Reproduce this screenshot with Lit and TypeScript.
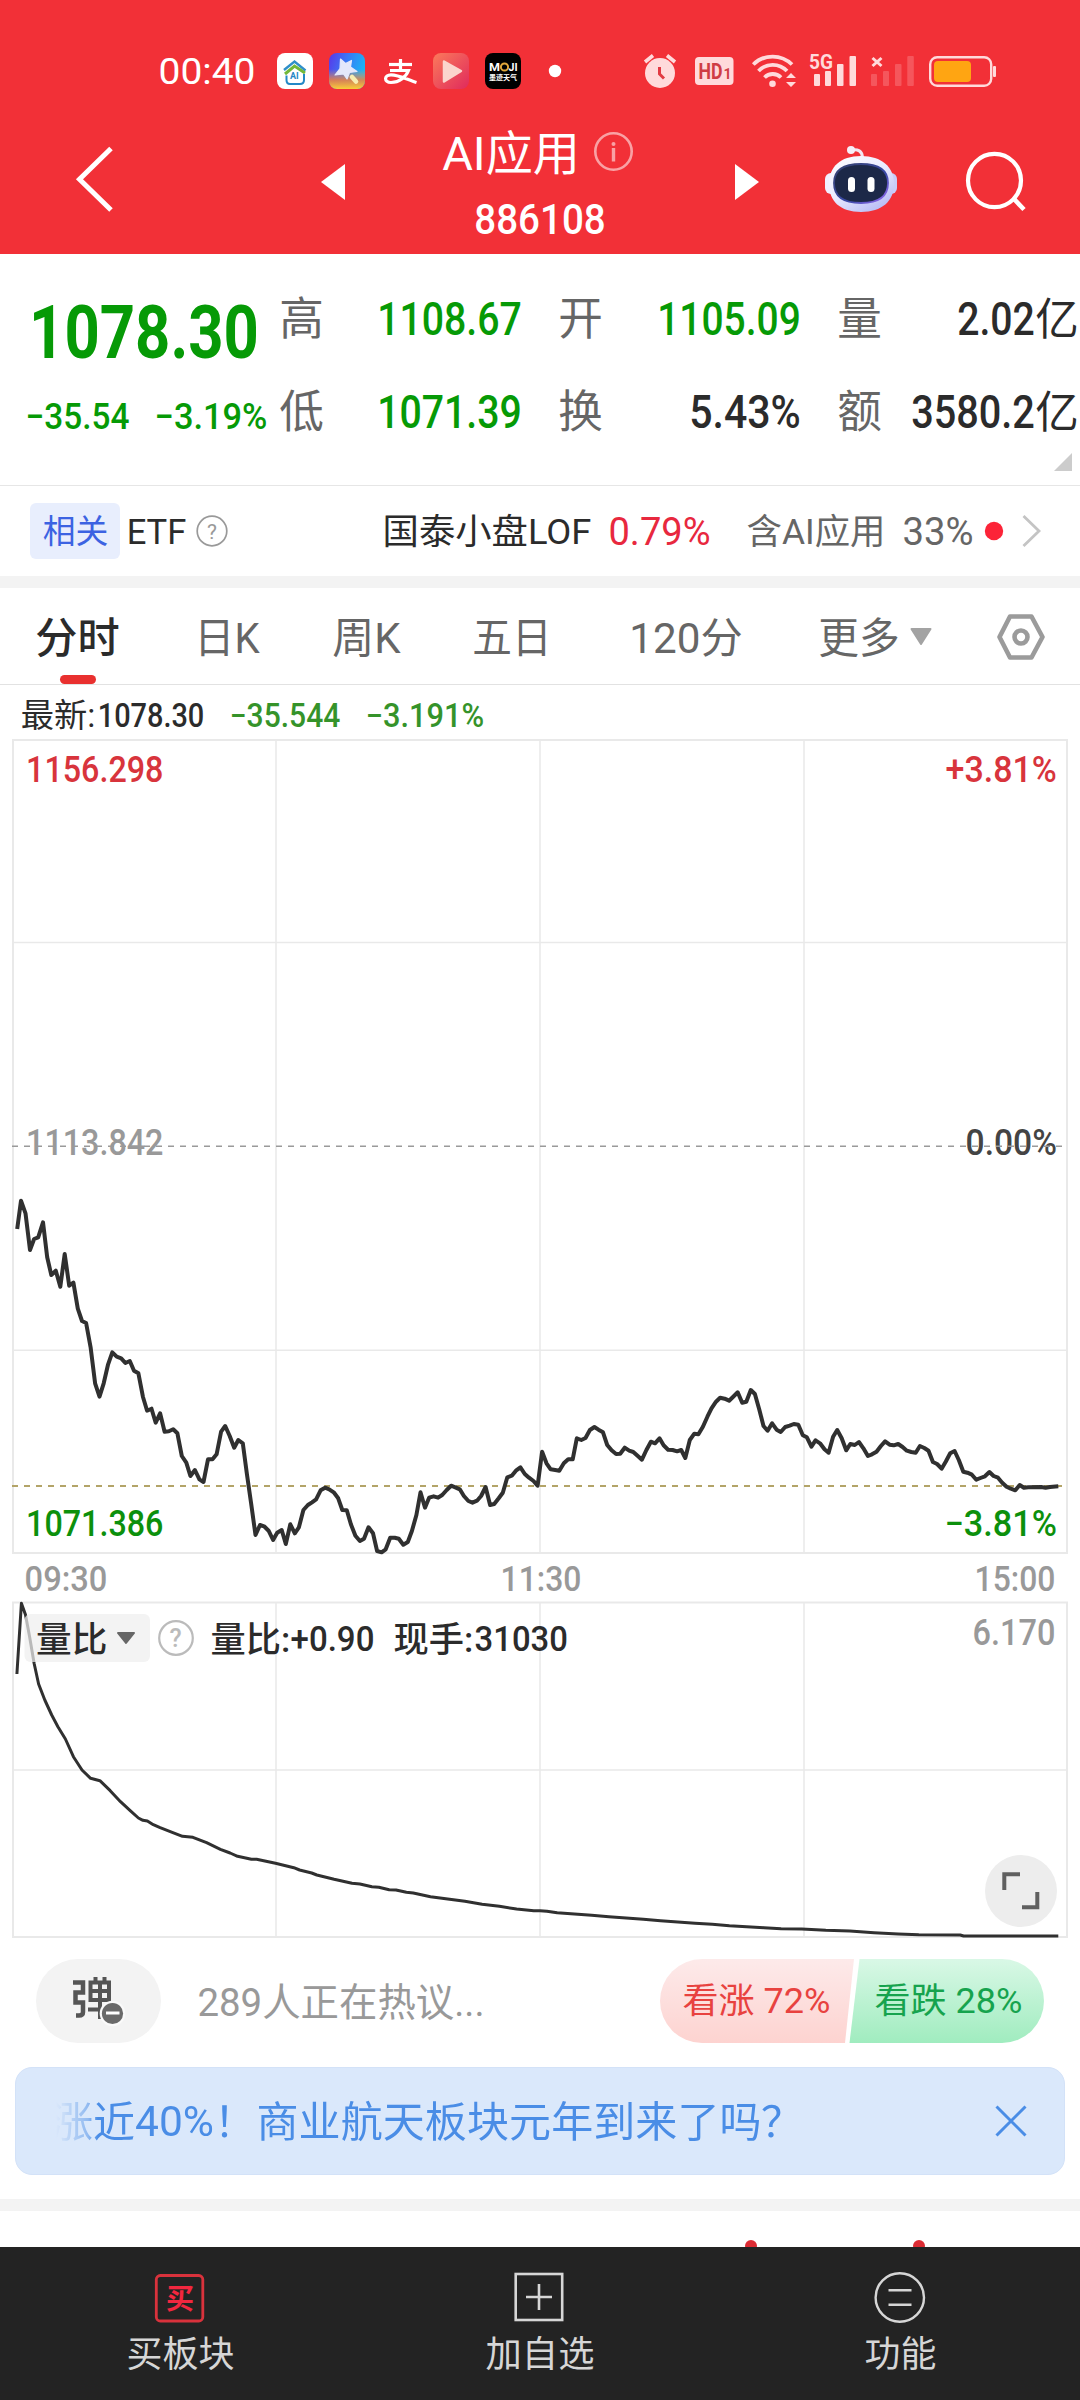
import { LitElement, html, svg, css } from "lit";
import { customElement } from "lit/decorators.js";

/** Text squeezed or stretched to a given ink width, centred on its line. */
const fit = (text: string, width: number, size: number, cls = "") => {
  const pad = size * 0.04;
  return html`<svg class="fit ${cls}" width=${width} height=${size} viewBox="0 0 ${width} ${size}">
    <text x=${-pad} y=${size * 0.862} font-size=${size} textLength=${width + pad * 2} lengthAdjust="spacingAndGlyphs">${text}</text>
  </svg>`;
};

/** Chart label at a position inside the plot. */
const label = (text: string, x1: number, x2: number, y: number, size: number, cls: string) => {
  const pad = size * 0.04;
  return svg`<text class=${cls} x=${x1 - pad} y=${y} font-size=${size} textLength=${x2 - x1 + pad * 2} lengthAdjust="spacingAndGlyphs">${text}</text>`;
};

const icon = (cls: string, x: number, y: number, w: number, h: number, body: unknown) =>
  html`<svg class="icon ${cls}" width=${w} height=${h} viewBox="${x} ${y} ${w} ${h}" fill="none">${body}</svg>`;

const STEP = 540 / 1568;
const toPath = (raw: string, base: number) =>
  raw.trim().split(/\s+/).map((p) => {
    const [x, y] = p.split(",").map(Number);
    return `${(x * STEP).toFixed(1)},${(base + y / 3).toFixed(1)}`;
  }).join(" ");
const shift = (raw: string) =>
  raw.trim().split(/\s+/).map((p) => {
    const [x, y] = p.split(",").map(Number);
    return `${x + 1568},${y}`;
  }).join(" ");

const MORNING = `50,327 61,242 74,280 87,390 99,357 111,352 125,307 137,412 149,465 162,452 175,500 188,402 201,497 213,488 226,566 238,603 250,609 263,682 276,790 289,830 301,790 314,733 326,697 339,710 352,715 364,729 377,723 389,752 402,760 415,830 427,872 440,866 452,908 465,880 478,935 490,934 503,928 515,940 528,1008 541,1028 553,1068 566,1050 579,1078 591,1086 604,1018 617,1018 629,1003 642,935 654,918 667,948 680,983 692,960 705,970 717,1062 729,1150 742,1245 755,1215 767,1219 780,1232 793,1260 805,1238 818,1230 830,1272 843,1213 856,1240 868,1222 881,1170 894,1155 906,1147 918,1138 931,1111 944,1103 956,1108 969,1117 982,1135 994,1170 1007,1171 1019,1213 1032,1247 1045,1263 1057,1256 1070,1222 1083,1240 1095,1293 1108,1297 1120,1288 1133,1253 1146,1253 1158,1256 1171,1274 1184,1266 1196,1233 1209,1185 1221,1117 1234,1163 1246,1133 1259,1129 1272,1133 1284,1125 1297,1110 1310,1097 1322,1102 1335,1108 1347,1128 1360,1143 1372,1148 1385,1142 1397,1128 1410,1101 1423,1155 1435,1152 1448,1135 1460,1118 1473,1072 1486,1067 1498,1052 1511,1042 1524,1062 1536,1073 1549,1083 1561,1097`;
const AFTERNOON = `6,995 19,1030 31,1048 44,1050 56,1052 69,1030 82,1018 95,1018 107,955 120,960 132,954 145,930 158,921 170,929 183,937 195,975 208,991 221,1002 233,1001 246,983 259,992 271,996 284,1008 296,1019 309,990 322,965 334,970 347,955 359,976 372,989 385,990 398,994 410,990 422,1014 435,960 448,941 460,943 473,920 486,890 498,865 511,845 523,833 536,836 549,842 561,830 574,817 587,848 599,845 612,810 624,822 637,870 649,918 661,932 674,910 687,929 699,936 712,921 725,917 737,912 750,914 763,946 775,952 788,980 800,961 813,970 826,988 838,998 851,950 863,930 876,955 889,991 901,972 914,975 926,966 939,985 952,1008 964,1003 977,995 990,978 1002,964 1015,974 1027,976 1040,972 1053,981 1065,992 1078,996 1091,998 1103,978 1116,984 1128,992 1141,1026 1153,1032 1166,1046 1178,1025 1191,1000 1204,993 1216,1020 1229,1055 1241,1058 1254,1064 1267,1079 1279,1074 1292,1069 1305,1056 1317,1068 1330,1073 1342,1088 1355,1100 1367,1106 1380,1111 1393,1095 1405,1103 1418,1102 1455,1101 1468,1103 1481,1101 1505,1099`;
const RATIO_AM = `49,402 62,190 74,224 86,290 99,370 112,432 130,480 150,525 168,560 190,597 213,650 238,690 263,715 290,722 320,752 350,785 378,812 402,834 415,841 428,843 445,854 465,863 500,877 530,889 560,892 600,908 640,928 668,939 690,949 730,958 745,958 800,970 853,983 870,990 905,999 920,1005 970,1018 1022,1030 1045,1032 1080,1040 1100,1042 1130,1049 1150,1050 1180,1057 1200,1059 1250,1070 1300,1077 1350,1084 1400,1093 1450,1099 1500,1107 1550,1112 1568,1112`;
const RATIO_PM = `20,1114 50,1118 100,1122 150,1126 200,1130 250,1134 300,1138 350,1142 400,1146 450,1150 500,1153 550,1157 600,1160 650,1163 700,1166 760,1167 830,1171 900,1173 970,1178 1040,1182 1100,1184 1220,1185 1230,1188 1505,1188`;

const PRICE = toPath(MORNING + " " + shift(AFTERNOON), 1120);
const RATIO = toPath(RATIO_AM + " " + shift(RATIO_PM), 1540);

@customElement("app-root")
export class AppRoot extends LitElement {
  static styles = css`
    :host { display: block; width: 1080px; height: 2400px; overflow: hidden; background: #fff;
      font-family: Roboto, "Noto Sans CJK SC", sans-serif; color: #2b2b2b; }
    * { box-sizing: border-box; }
    .page { display: flex; flex-direction: column; height: 2400px; }
    svg { display: block; flex: none; overflow: visible; }
    .fit text { fill: currentColor; }
    .num text, .num { font-weight: 500; }
    .big text { font-weight: 700; }
    .head { background: #f23037; color: #fff; height: 254px; flex: none; }
    .status { display: flex; align-items: center; height: 120px; padding: 22px 0 0 160px; }
    .s1 { margin-left: 23px; } .s2 { margin-left: 16px; } .s3 { margin-left: 19px; }
    .s4 { margin-left: 16px; } .s5 { margin-left: 16px; } .s6 { margin-left: 27px; }
    .s7 { margin-left: 82px; } .s8 { margin-left: 18px; } .s9 { margin-left: 18px; }
    .s10 { margin-left: 13px; } .s11 { margin-left: 14px; } .s12 { margin-left: 14px; }
    .bar { display: flex; align-items: center; height: 134px; padding: 0 0 12px 76px; }
    .back { margin-top: -4px; }
    .prev { margin: 2px 0 0 208px; }
    .title { width: 190px; margin-left: 98px; align-self: flex-start; }
    .name { display: flex; align-items: center; height: 64px; gap: 15px; padding-left: 1px; }
    .code { display: flex; align-items: center; height: 68px; padding-left: 33px; }
    .next { margin: 2px 0 0 102px; }
    .robot { margin: -3px 0 0 66px; } .search { margin-left: 69px; }

    .quote { display: flex; height: 231px; flex: none; }
    .main { width: 281px; padding-top: 40px; color: #069a06; }
    .price { display: flex; align-items: center; height: 74px; padding-left: 32px; }
    .delta { display: flex; align-items: center; padding: 30px 0 0 27px; gap: 28px; }
    .facts { display: grid; grid-template-columns: 239px 40px 239px 40px 240px; grid-template-rows: 93px 93px;
      padding-top: 18px; width: 799px; position: relative; }
    .fact { display: flex; align-items: center; justify-content: space-between; }
    .f2 { grid-column: 3; } .f3 { grid-column: 5; width: 238px; }
    .fact .lbl { color: #666; }
    .val { display: flex; align-items: center; gap: 4px; }
    .up { color: #069a06; }
    .corner { position: absolute; left: 773px; top: 199px; }
    .related { display: flex; align-items: center; height: 91px; flex: none; border-top: 1px solid #e6e6e6; padding-left: 30px; }
    .tag { width: 90px; height: 56px; border-radius: 6px; background: #e8eefd; color: #3c63e2; display: flex; align-items: center; justify-content: center; }
    .etf { margin-left: 8px; } .help { margin-left: 10px; } .fund { margin-left: 155px; }
    .rise { margin-left: 20px; color: #e8283e; } .has { margin-left: 39px; color: #666; }
    .pct { margin-left: 20px; color: #666; } .chev { margin-left: 12px; }
    .band { height: 12px; background: #f3f3f3; flex: none; }
    .tabs { display: flex; align-items: center; height: 97px; flex: none; border-bottom: 1px solid #e2e2e2; padding: 3px 0 0 37px; color: #666; }
    .tab.on { color: #2b2b2b; position: relative; }
    .tab.on::after { content: ""; position: absolute; left: 23px; bottom: -25px; width: 36px; height: 9px; border-radius: 5px; background: #e9302f; }
    .t2 { margin-left: 78px; } .t3 { margin-left: 76px; } .t4 { margin-left: 75px; }
    .t5 { margin-left: 81px; } .t6 { margin-left: 79px; } .t7 { margin-left: 12px; } .t8 { margin-left: 65px; }
    .latest { display: flex; align-items: center; height: 54px; padding: 6px 0 0 22px; flex: none; }
    .l2 { margin-left: 5px; } .l3 { margin-left: 28px; color: #35932a; } .l4 { margin-left: 28px; color: #35932a; }
    .chart { height: 1215px; }
    .chart text { font-weight: 500; }
    .frame { fill: none; stroke: #e9e9e9; stroke-width: 2; }
    .thin { stroke: #e9e9e9; stroke-width: 1.5; }
    .red { fill: #d8343c; } .grey { fill: #999; } .dark { fill: #444; } .green { fill: #0c900c; } .ink { fill: #2b2b2b; }
    .line { fill: none; stroke: #303030; stroke-linejoin: round; }

    .talk { display: flex; align-items: center; height: 94px; padding-left: 36px; flex: none; }
    .bullet { width: 125px; height: 84px; border-radius: 42px; background: #f3f3f3; display: flex; align-items: center; justify-content: center; }
    .hot { margin: 1px 177px 0 38px; color: #999; }
    .notice { display: flex; align-items: center; height: 108px; margin: 19px 15px 24px; border-radius: 17px; background: #dae8fb; border: 1px solid #d3e2f8; flex: none; }
    .ticker { margin-left: 40px; width: 880px; display: flex; color: #4a8de6; overflow: hidden;
      -webkit-mask-image: linear-gradient(90deg, transparent 0, rgba(0,0,0,.5) 32px, #000 42px);
      mask-image: linear-gradient(90deg, transparent 0, rgba(0,0,0,.5) 32px, #000 42px); }
    .close { margin-left: 59px; }
    .peek { flex: 1; }
    .nav { display: flex; height: 153px; flex: none; background: #232323; color: #d6d6d6; }
    .item { flex: 1; display: flex; flex-direction: column; align-items: center; padding-top: 25px; gap: 12px; }
  `;

  private statusBar() {
    const pale = "#ffdadb";
    return html`<div class="status">
      ${fit("00:40", 94, 37.5)}
      ${icon("s1", 277, 53, 36, 36, svg`
        <rect x="277" y="53" width="36" height="36" rx="8" fill="#fff"/>
        <path d="M284 70 L294.5 61.5 L305.5 70.5" stroke="#2f8fc9" stroke-width="2.4"/>
        <path d="M285 74 L294.5 66 L305 73" stroke="#72b83a" stroke-width="3"/>
        <path d="M286.5 75.500 V80 Q286.500 84 290 84 H300 Q304 84 304 80 V74" stroke="#2388c6" stroke-width="2"/>
        <text x="290" y="79" font-size="9" font-weight="700" fill="#2388c6">AI</text>`)}
      ${icon("s2", 329, 53, 36, 36, svg`
        <defs><linearGradient id="sky" x1="0" y1="0" x2="1" y2=".35"><stop offset="0" stop-color="#5a35e8"/><stop offset=".5" stop-color="#3a78f5"/><stop offset="1" stop-color="#19b4f5"/></linearGradient>
        <linearGradient id="warm" x1="0" y1="0" x2="0" y2="1"><stop offset=".45" stop-color="#f29a55" stop-opacity="0"/><stop offset=".75" stop-color="#f2823c" stop-opacity=".85"/><stop offset="1" stop-color="#f9cf3a"/></linearGradient></defs>
        <rect x="329" y="53" width="36" height="36" rx="8" fill="url(#sky)"/><rect x="329" y="53" width="36" height="36" rx="8" fill="url(#warm)"/>
        <path d="M340.500 59 L345.500 63.500 L351.500 60.500 L350.500 67 L357 71.500 L349.500 72.500 L347 79 L343.500 74 L335 75 L340 68.500Z" fill="#e4e8fb" stroke="#e4e8fb" stroke-width="1.200" stroke-linejoin="round"/>
        <path d="M352 77 L356 81.500" stroke="#f7edb0" stroke-width="4.600" stroke-linecap="round"/>`)}
      ${icon("s3", 384, 57, 33, 28, svg`
        <g stroke="#fff" stroke-width="3.200"><path d="M389 64.500 H412"/><path d="M400.500 59 V70"/><path d="M390 70.500 H408.500 C406 77 399 82.500 391 82.500 C383.500 82.500 384 74.800 391 74.800 C399 74.800 408 80 416.500 82.500"/></g>`)}
      ${icon("s4", 433, 53, 36, 36, svg`
        <defs><linearGradient id="play" x1="0" y1="0" x2="1" y2="1"><stop offset="0" stop-color="#fb7a5b"/><stop offset="1" stop-color="#e02a5c"/></linearGradient></defs>
        <rect x="433" y="53" width="36" height="36" rx="8" fill="url(#play)"/>
        <path d="M444 61.500 L461 71 L444 81.500Z" fill="#fbd5cd" stroke="#fbd5cd" stroke-width="2.500" stroke-linejoin="round"/>`)}
      ${icon("s5", 485, 53, 36, 36, svg`
        <rect x="485" y="53" width="36" height="36" rx="8" fill="#000"/>
        <text x="489" y="71" font-size="11.500" font-weight="700" fill="#fff" textLength="11" lengthAdjust="spacingAndGlyphs">M</text>
        <circle cx="504.500" cy="67" r="3.600" stroke="#e0a63a" stroke-width="2"/>
        <text x="508.500" y="71" font-size="11.500" font-weight="700" fill="#fff" textLength="9" lengthAdjust="spacingAndGlyphs">JI</text>
        <text x="489" y="79.500" font-size="7" font-weight="700" fill="#fff" textLength="28">墨迹天气</text>`)}
      ${icon("s6", 548, 65, 13, 13, svg`<circle cx="555" cy="71" r="6.200" fill="#fff"/>`)}
      ${icon("s7", 643, 54, 34, 34, svg`
        <circle cx="660" cy="73" r="15" fill=${pale}/><path d="M645 62 L653 55.500 M667 55.500 L675 62" stroke=${pale} stroke-width="3.600"/>
        <path d="M659.500 67 V74 L664 78.500" stroke="#e23a42" stroke-width="3"/>`)}
      ${icon("s8", 695, 56, 39, 32, svg`
        <rect x="695" y="58" width="38.500" height="28" rx="4" fill=${pale}/>
        <text x="698.500" y="80" font-size="22.500" font-weight="700" fill="#cf3d44" textLength="24" lengthAdjust="spacingAndGlyphs">HD</text>
        <text x="723.500" y="80" font-size="14" font-weight="700" fill="#cf3d44" textLength="8">1</text>`)}
      ${icon("s9", 752, 53, 44, 36, svg`
        <g stroke=${pale} stroke-width="3.800"><path d="M753.300 64.500 A27.500 27.500 0 0 1 792 64.500"/><path d="M758.500 71 A19.500 19.500 0 0 1 787 71"/><path d="M764.500 77.500 A11.500 11.500 0 0 1 781 77.500"/></g>
        <circle cx="772.500" cy="83.700" r="3.300" fill=${pale}/><path d="M786 78 L791 73 L796 78Z M786 82 L791 87 L796 82Z" fill=${pale}/>`)}
      ${icon("s10", 809, 54, 47, 34, svg`
        <text x="809" y="69" font-size="21" font-weight="700" fill=${pale} textLength="24" lengthAdjust="spacingAndGlyphs">5G</text>
        <g fill=${pale}><rect x="814" y="74" width="6" height="12" rx="1"/><rect x="825" y="71" width="6" height="15" rx="1"/><rect x="837" y="64" width="6.500" height="22" rx="1"/><rect x="849.500" y="56" width="6.500" height="30" rx="1"/></g>`)}
      ${icon("s11", 870, 54, 44, 34, svg`
        <path d="M872.500 58 L881.500 66 M881.500 58 L872.500 66" stroke=${pale} stroke-width="3"/>
        <g fill="#ffb9bb" opacity=".28"><rect x="871" y="74" width="6" height="12" rx="1"/><rect x="883" y="71" width="6" height="15" rx="1"/><rect x="895" y="64" width="6.500" height="22" rx="1"/><rect x="907.300" y="56" width="6.500" height="30" rx="1"/></g>`)}
      ${icon("s12", 928, 54, 68, 33, svg`
        <rect x="930.200" y="56.200" width="61" height="28.600" rx="7" stroke=${pale} stroke-width="2.400"/>
        <rect x="934" y="60" width="37" height="21" rx="4" fill="#ffa512"/><rect x="993" y="65" width="3" height="11" rx="1" fill=${pale}/>`)}
    </div>`;
  }

  private titleBar() {
    return html`<div class="bar">
      ${icon("back", 76, 146, 37, 66, svg`<path d="M111 148.500 L79.500 179.300 L111 210" stroke="#fff" stroke-width="5"/>`)}
      ${icon("prev", 321, 164, 24, 36, svg`<path d="M345 164 L321 182 L345 200Z" fill="#fff"/>`)}
      <div class="title">
        <div class="name">${fit("AI应用", 134, 47)}${icon("", 593, 131, 41, 41, svg`
          <circle cx="613.500" cy="150.500" r="18.200" stroke="#fff" stroke-opacity=".55" stroke-width="2.600"/>
          <path d="M613.500 147 V160.500" stroke="#fff" stroke-opacity=".55" stroke-width="3.400"/><circle cx="613.500" cy="143" r="2" fill="#fff" fill-opacity=".55"/>`)}</div>
        <div class="code">${fit("886108", 128, 42.5, "num")}</div>
      </div>
      ${icon("next", 735, 164, 24, 36, svg`<path d="M735 164 L759 182 L735 200Z" fill="#fff"/>`)}
      ${icon("robot", 825, 146, 72, 67, svg`
        <defs><linearGradient id="head" x1="0" y1="0" x2=".7" y2="1"><stop offset="0" stop-color="#fff"/><stop offset=".55" stop-color="#e9eaff"/><stop offset="1" stop-color="#b9bdf5"/></linearGradient>
        <linearGradient id="rim" x1="0" y1="0" x2="1" y2="1"><stop offset="0" stop-color="#34406b"/><stop offset=".6" stop-color="#3a49a8"/><stop offset="1" stop-color="#9a6cf5"/></linearGradient></defs>
        <path d="M852 150 C858 149 862 151 862.500 157" stroke="#f3e6f2" stroke-width="3"/><circle cx="851" cy="150" r="4" fill="#f6eef8"/>
        <rect x="825" y="173" width="12" height="21" rx="6" fill="#f1efff"/><rect x="885" y="173" width="12" height="21" rx="6" fill="#c9cdfa"/>
        <path d="M861 156 C882 156 894 167 894 184 C894 201 882 212 861 212 C840 212 829 201 829 184 C829 167 840 156 861 156Z" fill="url(#head)"/>
        <path d="M861 164 C879 164 888 170 888 183 C888 197 879 203 861 203 C843 203 834 197 834 183 C834 170 843 164 861 164Z" fill="#1c2848" stroke="url(#rim)" stroke-width="1.800"/>
        <rect x="848" y="177" width="7" height="15" rx="3.500" fill="#fff"/><rect x="867.500" y="177" width="7" height="15" rx="3.500" fill="#fff"/>`)}
      ${icon("search", 966, 151, 60, 61, svg`<ellipse cx="994.500" cy="180.500" rx="26.500" ry="26.700" stroke="#fff" stroke-width="4.200"/><path d="M1013.500 198.500 L1024 209.500" stroke="#fff" stroke-width="4.600"/>`)}
    </div>`;
  }

  private fact(cls: string, name: string, val: unknown) {
    return html`<div class="fact ${cls}">${fit(name, 41, 45, "lbl")}<div class="val">${val}</div></div>`;
  }

  private quote() {
    const tick = (s: string, w: number, c = "") => fit(s, w, 45.5, "num " + c);
    return html`<div class="quote">
      <div class="main">
        <div class="price">${fit("1078.30", 224, 74, "big")}</div>
        <div class="delta">${fit("−35.54", 101, 36.5, "num")}${fit("−3.19%", 110, 36.5, "num")}</div>
      </div>
      <div class="facts">
        ${this.fact("", "高", tick("1108.67", 141, "up"))}
        ${this.fact("f2", "开", tick("1105.09", 140, "up"))}
        ${this.fact("f3", "量", [tick("2.02", 74), fit("亿", 40, 44)])}
        ${this.fact("", "低", tick("1071.39", 141, "up"))}
        ${this.fact("f2", "换", tick("5.43%", 108))}
        ${this.fact("f3", "额", [tick("3580.2", 120), fit("亿", 40, 44)])}
        ${icon("corner", 1054, 453, 18, 18, svg`<path d="M1072 453 V471 H1054Z" fill="#ccc"/>`)}
      </div>
    </div>
    <div class="related">
      <div class="tag">${fit("相关", 63, 33)}</div>
      ${fit("ETF", 57, 34.5, "etf")}
      ${icon("help", 195, 514, 34, 34, svg`<circle cx="212" cy="531" r="14.800" stroke="#999" stroke-width="1.700"/><text x="207" y="538.500" font-size="21" fill="#999">?</text>`)}
      ${fit("国泰小盘LOF", 206, 35, "fund")}
      ${fit("0.79%", 99, 38.5, "rise")}
      ${fit("含AI应用", 136, 35, "has")}
      ${fit("33%", 68, 38.5, "pct")}
      ${icon("chev", 986, 514, 58, 34, svg`<circle cx="996" cy="531" r="9.200" fill="#fc2438"/><path d="M1025.500 516 L1041 531 L1025.500 546" stroke="#c4c4c4" stroke-width="2.800"/>`)}
    </div>
    <div class="band"></div>`;
  }

  private tabs() {
    return html`<div class="tabs">
      <div class="tab on">${fit("分时", 81, 42, "num")}</div>
      ${fit("日K", 62, 42, "t2")}${fit("周K", 65, 42, "t3")}${fit("五日", 76, 42, "t4")}
      ${fit("120分", 110, 42, "t5")}${fit("更多", 78, 42, "t6")}
      ${icon("t7", 909, 627, 22, 20, svg`<path d="M910.500 628 H929.500 L920 643Z" fill="#a3a3a3" stroke="#a3a3a3" stroke-width="2" stroke-linejoin="round"/>`)}
      ${icon("t8", 996, 613, 48, 48, svg`<path d="M1009 615.500 H1030.500 L1041.500 636 L1030.500 656.500 H1009 L998.500 636Z" stroke="#9b9b9b" stroke-width="4.600" stroke-linejoin="round"/><circle cx="1020" cy="636" r="6.500" stroke="#9b9b9b" stroke-width="4.600"/>`)}
    </div>
    <div class="latest">
      ${fit("最新:", 72, 33)}${fit("1078.30", 104, 32.5, "num l2")}${fit("−35.544", 108, 32.5, "num l3")}${fit("−3.191%", 116, 32.5, "num l4")}
    </div>`;
  }

  private chart() {
    return html`<svg class="chart" width="1080" height="1215" viewBox="0 739 1080 1215">
      <rect class="frame" x="13" y="740" width="1054" height="813"/>
      <path class="thin" d="M13 942.500 H1067 M13 1350.300 H1067 M276 740 V1553 M540 740 V1553 M804 740 V1553"/>
      <rect class="frame" x="13" y="1602.500" width="1054" height="334.500"/>
      <path class="thin" d="M13 1770 H1067 M276 1602 V1937 M540 1602 V1937 M804 1602 V1937"/>
      ${label("1113.842", 27.5, 162, 1155, 36, "grey")}
      ${label("0.00%", 967, 1055.5, 1155, 36, "dark")}
      <path d="M12 1146.300 H1062" stroke="#9a9a9a" stroke-width="1.600" stroke-dasharray="6 6"/>
      <path d="M12 1486 H1062" stroke="#b3a468" stroke-width="1.800" stroke-dasharray="6 6"/>
      <polyline class="line" stroke-width="4" points=${PRICE}/>
      ${label("1156.298", 27.5, 162, 782.3, 36, "red")}
      ${label("+3.81%", 947, 1055.5, 782.3, 36, "red")}
      ${label("1071.386", 27.5, 162, 1536, 36, "green")}
      ${label("−3.81%", 946, 1055.5, 1536, 36, "green")}
      ${label("09:30", 26, 106, 1591, 35, "grey")}
      ${label("11:30", 502, 580, 1591, 35, "grey")}
      ${label("15:00", 976, 1054, 1591, 35, "grey")}
      ${label("6.170", 974, 1054, 1645, 36, "grey")}
      <polyline class="line" stroke-width="3" points=${RATIO}/>
      <rect x="24.500" y="1614" width="125.500" height="48" rx="6" fill="#efefef" fill-opacity=".72"/>
      ${label("量比", 37.5, 106, 1652, 35, "ink")}
      <path d="M118 1633 H134 L126 1643Z" fill="#666" stroke="#666" stroke-width="2" stroke-linejoin="round"/>
      <circle cx="176" cy="1638" r="16.800" fill="none" stroke="#bbb" stroke-width="2.200"/>
      <text x="169.500" y="1647" font-size="25" fill="#bbb">?</text>
      ${label("量比:", 212, 289, 1652, 35, "ink")}
      ${label("+0.90", 292, 373, 1651, 35.5, "ink")}
      ${label("现手:", 395, 472, 1652, 35, "ink")}
      ${label("31030", 476, 566.5, 1651, 35.5, "ink")}
      <circle cx="1021" cy="1891" r="36" fill="#ededed"/>
      <path d="M1004.300 1890 V1874.300 H1020 M1022 1907.300 H1037.300 V1892" fill="none" stroke="#606060" stroke-width="4"/>
    </svg>`;
  }

  private footer() {
    return html`<div class="talk">
      <div class="bullet">${icon("", 71, 1973, 54, 54, svg`
        <g stroke="#555" stroke-width="4.500"><path d="M72 1981.500 H82 V1991.500 H74.500 V2001.500 H82 V2011 Q82 2014.500 78 2014.500 H75"/></g>
        <g stroke="#555" stroke-width="4"><path d="M94.500 1976 V1982 M103.500 1976 V1982"/><path d="M89.500 1981.500 H108 V1999 H89.500Z M89.500 1990 H108 M99 1981 V2018 M87 2008.500 H110"/></g>
        <circle cx="111.500" cy="2012.500" r="12.800" fill="#fafafa"/><circle cx="111.500" cy="2012.500" r="10.600" fill="#6a6a6a"/><path d="M105 2012 H118.500" stroke="#fff" stroke-width="3"/>`)}</div>
      ${fit("289人正在热议...", 284, 39, "hot")}
      <svg width="384" height="84" viewBox="660 1959 384 84">
        <defs><linearGradient id="bull" x1="0" y1="0" x2="0" y2="1"><stop offset="0" stop-color="#fdeaea"/><stop offset="1" stop-color="#fdd3d0"/></linearGradient>
        <linearGradient id="bear" x1="0" y1="0" x2="0" y2="1"><stop offset="0" stop-color="#d9f8e6"/><stop offset="1" stop-color="#a0ecbf"/></linearGradient></defs>
        <path d="M702 1959 H854 L845 2043 H702 A42 42 0 0 1 702 1959Z" fill="url(#bull)"/>
        <path d="M859.500 1959 H1002 A42 42 0 0 1 1002 2043 H849.500Z" fill="url(#bear)"/>
        <text x="682.500" y="2013" font-size="35" fill="#e8423f" textLength="148" lengthAdjust="spacingAndGlyphs">看涨 72%</text>
        <text x="874.500" y="2013" font-size="35" fill="#16a34e" textLength="148" lengthAdjust="spacingAndGlyphs">看跌 28%</text>
      </svg>
    </div>
    <div class="notice">
      <div class="ticker"><svg width="880" height="60" viewBox="56 2091 880 60"><g font-size="42" fill="currentColor">
        <text x="51" y="2137">涨近</text><text x="135" y="2136" textLength="79" lengthAdjust="spacingAndGlyphs">40%</text>
        <text x="214" y="2137" font-family="Noto Sans CJK SC">！</text><text x="256.500" y="2137" textLength="505">商业航天板块元年到来了吗</text><text x="761" y="2137" font-family="Noto Sans CJK SC">？</text></g></svg></div>
      ${icon("close", 995, 2105, 32, 32, svg`<path d="M996.500 2106.500 L1025.500 2135.500 M1025.500 2106.500 L996.500 2135.500" stroke="#4a8de6" stroke-width="3"/>`)}
    </div>
    <div class="band"></div>
    <div class="peek"><svg width="1080" height="36" viewBox="0 2211 1080 36"><circle cx="751" cy="2246" r="6" fill="#dc2c34"/><circle cx="919" cy="2246" r="6" fill="#dc2c34"/></svg></div>
    <div class="nav">
      <div class="item">${icon("", 154, 2272, 52, 52, svg`<rect x="156.300" y="2275.500" width="46.500" height="45.500" rx="4" stroke="#d9323c" stroke-width="2.800"/><text x="166" y="2309" font-size="28" font-weight="700" fill="#f2273f">买</text>`)}${fit("买板块", 105, 36)}</div>
      <div class="item">${icon("", 514, 2272, 52, 52, svg`<rect x="515.700" y="2274" width="46.500" height="46" stroke="#d6d6d6" stroke-width="2.600"/><path d="M539 2284 V2310 M526 2297 H552" stroke="#d6d6d6" stroke-width="2.600"/>`)}${fit("加自选", 106, 36)}</div>
      <div class="item">${icon("", 873.5, 2272, 52, 52, svg`<circle cx="899.300" cy="2297.500" r="24.200" stroke="#d6d6d6" stroke-width="2.400"/><path d="M888 2290.300 H911 M888 2304.700 H911" stroke="#d6d6d6" stroke-width="2.600"/>`)}${fit("功能", 69, 36)}</div>
    </div>`;
  }

  render() {
    return html`<div class="page">
      <div class="head">${this.statusBar()}${this.titleBar()}</div>
      ${this.quote()}${this.tabs()}${this.chart()}${this.footer()}
    </div>`;
  }
}
